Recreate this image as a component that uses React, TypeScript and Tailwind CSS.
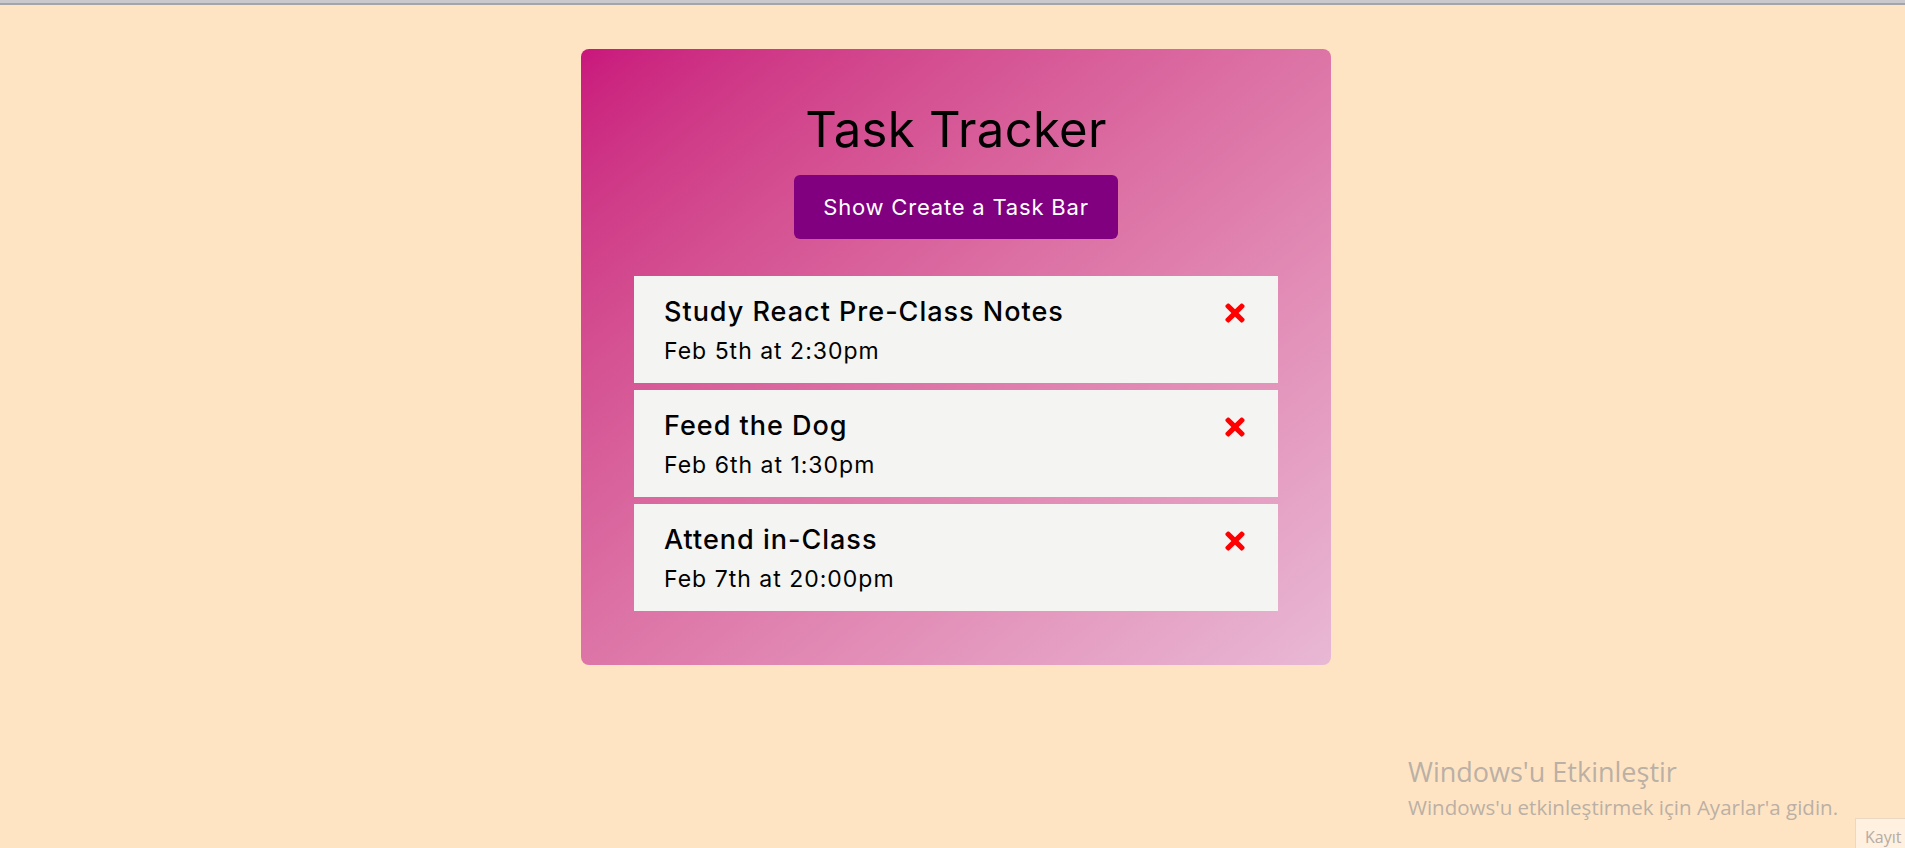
import { FaTimes } from "react-icons/fa";

const tasks = [
  { id: 1, text: "Study React Pre-Class Notes", day: "Feb 5th at 2:30pm" },
  { id: 2, text: "Feed the Dog", day: "Feb 6th at 1:30pm" },
  { id: 3, text: "Attend in-Class", day: "Feb 7th at 20:00pm" },
];

function Task({ text, day }: { text: string; day: string }) {
  return (
    <div className="h-[107px] bg-[#f4f4f2] pl-[30px] pr-[29px] pt-[20px]">
      <div className="flex items-center justify-between">
        <h3 className="text-[27px] leading-[32px] font-medium tracking-[1px] text-black">{text}</h3>
        <FaTimes size={28} className="mt-[2px] text-[#ff0000]" />
      </div>
      <p className="mt-[9px] text-[23px] leading-[28px] tracking-[1px] text-black">{day}</p>
    </div>
  );
}

export default function App() {
  return (
    <div className="relative min-h-screen overflow-hidden bg-[#ffe4c4] font-['Inter',sans-serif]">
      <div className="h-[3px] bg-[#c9c9cd]" />
      <div className="h-[2px] bg-[#a3a3a8]" />

      <div className="pl-[7px]">
        <div className="mx-auto mt-[44px] w-[750px] rounded-lg bg-gradient-to-br from-[#c9167c] to-[#e8b8d4] px-[53px] pt-[52px] pb-[54px]">
          <h1 className="text-center text-[49px] leading-[58px] font-normal tracking-[0.3px] text-black">Task Tracker</h1>
          <div className="mt-4 flex justify-center">
            <button className="h-16 w-[324px] rounded-md bg-[#800080] text-[22px] tracking-[0.8px] text-white">
              Show Create a Task Bar
            </button>
          </div>
          <div className="mt-[37px] flex flex-col gap-[7px]">
            {tasks.map((t) => (
              <Task key={t.id} text={t.text} day={t.day} />
            ))}
          </div>
        </div>
      </div>

      <div className="absolute left-[1408px] top-[754px] font-['Open_Sans',sans-serif] text-[#bab0a5]">
        <div className="text-[27px] leading-[36px]">Windows'u Etkinleştir</div>
        <div className="mt-[3px] text-[20.5px] leading-[28px]">Windows'u etkinleştirmek için Ayarlar'a gidin.</div>
      </div>
      <div className="absolute left-[1855px] top-[818px] h-[40px] w-[70px] border border-[#ecd8c0] bg-[#fff0e0] pl-[9px] pt-[6px] font-['Open_Sans',sans-serif] text-[16px] text-[#b5aca3]">
        Kayıt
      </div>
    </div>
  );
}
